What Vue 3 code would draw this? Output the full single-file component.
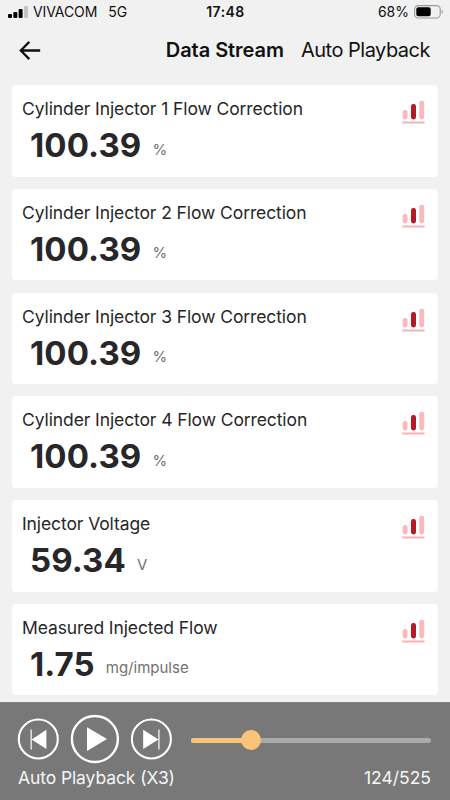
<script setup>
const readings = [
  { name: 'Cylinder Injector 1 Flow Correction', value: '100.39', unit: '%' },
  { name: 'Cylinder Injector 2 Flow Correction', value: '100.39', unit: '%' },
  { name: 'Cylinder Injector 3 Flow Correction', value: '100.39', unit: '%' },
  { name: 'Cylinder Injector 4 Flow Correction', value: '100.39', unit: '%' },
  { name: 'Injector Voltage', value: '59.34', unit: 'V' },
  { name: 'Measured Injected Flow', value: '1.75', unit: 'mg/impulse' },
]
const frame = 124
const total = 525
const progress = 25
</script>

<template>
  <div class="screen">
    <div class="status">
      <div class="carrier">
        <svg class="signal" width="20" height="12" viewBox="0 0 20 12">
          <rect x="0" y="8" width="4" height="4" rx="1" />
          <rect x="5.3" y="6" width="4" height="6" rx="1" />
          <rect x="10.6" y="3" width="4" height="9" rx="1" />
          <rect x="16" y="0" width="4" height="12" rx="1" fill="#c4c4c4" />
        </svg>
        <span class="operator">VIVACOM</span>
        <span class="network">5G</span>
      </div>
      <span class="clock">17:48</span>
      <div class="power">
        <span class="percent">68%</span>
        <svg width="29" height="14" viewBox="0 0 29 14">
          <rect x="0.6" y="0.6" width="25.6" height="12.4" rx="3.6" fill="none" stroke="#999" stroke-width="1.1" />
          <rect x="2.3" y="2.3" width="14.4" height="9" rx="2" />
          <path d="M27.6 4.8q1.2.6 1.2 2t-1.2 2z" fill="#999" />
        </svg>
      </div>
    </div>

    <header class="nav">
      <svg class="back" width="22" height="19" viewBox="0 0 22 19" fill="none" stroke="#111" stroke-width="2.3">
        <path d="M21.2 9.5H2M10.3 0.9 1.8 9.5l8.5 8.6" />
      </svg>
      <h1>Data Stream</h1>
      <span class="mode">Auto Playback</span>
    </header>

    <main class="list">
      <section v-for="item in readings" :key="item.name" class="card">
        <div class="info">
          <div class="name">{{ item.name }}</div>
          <div class="reading">
            <span class="value">{{ item.value }}</span>
            <span class="unit">{{ item.unit }}</span>
          </div>
        </div>
        <svg class="chart" width="23" height="24" viewBox="0 0 23 24">
          <rect x="0.6" y="10" width="5" height="9.4" rx="2.3" fill="#f9b9bd" />
          <rect x="9" y="4" width="5" height="15.4" rx="2.3" fill="#b51a24" />
          <rect x="17.2" y="0.7" width="5" height="18.7" rx="2.4" fill="#f9b9bd" />
          <rect x="0.1" y="21.6" width="22.6" height="1.8" rx="0.6" fill="#f9b1b7" />
        </svg>
      </section>
    </main>

    <footer class="player">
      <div class="controls">
        <svg width="42" height="42" viewBox="0 0 42 42">
          <circle cx="21.3" cy="21" r="19.5" fill="none" stroke="#fff" stroke-width="2.1" />
          <path d="M14.2 11.5V31.5" stroke="#ddd" stroke-width="1.6" />
          <path d="M29.4 11.8v19.2L14.7 21.4z" fill="#fff" />
        </svg>
        <svg width="50" height="50" viewBox="0 0 50 50">
          <circle cx="24.9" cy="25" r="23" fill="none" stroke="#fff" stroke-width="2.4" />
          <path d="M17 13.3v23.6l20-11.8z" fill="#fff" />
        </svg>
        <svg width="42" height="42" viewBox="0 0 42 42">
          <circle cx="20.4" cy="21" r="19.5" fill="none" stroke="#fff" stroke-width="2.1" />
          <path d="M27.9 11.5V31.5" stroke="#ddd" stroke-width="1.6" />
          <path d="M12.2 11.8v19.2L27.4 21.4z" fill="#fff" />
        </svg>
        <div class="track">
          <div class="played" :style="{ width: progress + '%' }"><i class="thumb"></i></div>
        </div>
      </div>
      <div class="caption">
        <span class="speed">Auto Playback (X3)</span>
        <span class="count">{{ frame }}/{{ total }}</span>
      </div>
    </footer>
  </div>
</template>

<style>
body {
  margin: 0;
}
</style>

<style scoped>
.screen {
  width: 450px;
  height: 800px;
  display: flex;
  flex-direction: column;
  overflow: hidden;
  background: #f1f1f1;
  color: #111;
  font-family: Inter, "Liberation Sans", sans-serif;
  white-space: nowrap;
}
.status {
  height: 24px;
  box-sizing: border-box;
  padding: 0 7px 0 8px;
  display: grid;
  grid-template-columns: 1fr auto 1fr;
  align-items: center;
  font-size: 14px;
  line-height: 24px;
}
.carrier,
.power {
  display: flex;
  align-items: center;
}
.signal {
  margin-right: 5px;
}
.operator {
  margin-right: 11px;
  letter-spacing: -0.1px;
}
.clock {
  font-weight: 600;
  letter-spacing: 0.45px;
}
.power {
  justify-content: flex-end;
  gap: 5px;
}
.nav {
  height: 61px;
  box-sizing: border-box;
  padding: 0 20px 9px 19px;
  display: flex;
  align-items: center;
  font-size: 20px;
}
.back {
  margin-right: auto;
}
.nav h1 {
  margin: 0 17px 0 0;
  font-size: 20px;
  font-weight: 600;
  letter-spacing: -0.05px;
}
.mode {
  letter-spacing: -0.5px;
}
.list {
  height: 617px;
  padding: 0 12px;
  display: flex;
  flex-direction: column;
  gap: 12.25px;
}
.card {
  height: 91.5px;
  flex: none;
  box-sizing: border-box;
  padding: 13px 13px 0 10px;
  display: flex;
  justify-content: space-between;
  background: #fff;
  border-radius: 4px;
  color: #272729;
}
.name {
  font-size: 17.5px;
  line-height: 22px;
  letter-spacing: -0.1px;
}
.reading {
  display: flex;
  align-items: baseline;
  padding: 5px 0 0 8px;
}
.value {
  font-size: 33px;
  line-height: 40px;
  font-weight: 700;
  letter-spacing: 0.1px;
}
.unit {
  position: relative;
  top: -2.5px;
  margin-left: 11px;
  font-size: 15px;
  color: #707070;
}
.chart {
  margin-top: 2px;
}
.player {
  flex: 1;
  background: #787878;
  border-top: 1px solid #828282;
  color: #f5f5f5;
  padding: 11px 19px 0 17px;
}
.controls {
  display: flex;
  align-items: center;
  gap: 11px;
}
.track {
  flex: 1;
  height: 5px;
  margin: 2px 0 0 7px;
  border-radius: 3px;
  background: #aaa;
}
.played {
  position: relative;
  height: 100%;
  border-radius: 3px;
  background: #fbc27a;
}
.thumb {
  position: absolute;
  right: -10px;
  top: -8px;
  width: 20px;
  height: 20px;
  border-radius: 50%;
  background: #fbc27a;
}
.caption {
  display: flex;
  justify-content: space-between;
  padding: 2px 0 0 1px;
  font-size: 17.5px;
  line-height: 24px;
}
.speed {
  letter-spacing: -0.1px;
}
</style>
